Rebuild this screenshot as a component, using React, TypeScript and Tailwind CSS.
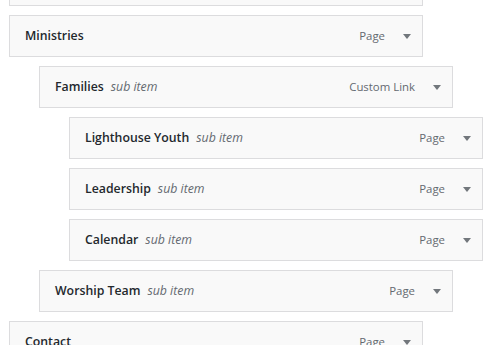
const items = [
  { title: "Home", sub: false, type: "Page", depth: 0 },
  { title: "Ministries", sub: false, type: "Page", depth: 0 },
  { title: "Families", sub: true, type: "Custom Link", depth: 1 },
  { title: "Lighthouse Youth", sub: true, type: "Page", depth: 2 },
  { title: "Leadership", sub: true, type: "Page", depth: 2 },
  { title: "Calendar", sub: true, type: "Page", depth: 2 },
  { title: "Worship Team", sub: true, type: "Page", depth: 1 },
  { title: "Contact", sub: false, type: "Page", depth: 0 },
];

const indent = ["ml-[9px]", "ml-[39px]", "ml-[69px]"];

const MenuItem = ({ title, sub, type, depth }: (typeof items)[number]) => (
  <div
    className={`${indent[depth]} w-[414px] h-[42px] shrink-0 flex items-center justify-between border border-[#dcdcde] bg-[#f9f9f9] pl-[15px] pr-[11px]`}
  >
    <div className="flex items-baseline text-[12.3px] leading-5">
      <span className="font-semibold text-[#23282d]">{title}</span>
      {sub && <span className="ml-[7px] italic text-[#646970]">sub item</span>}
    </div>
    <div className="flex items-center gap-[18px]">
      <span className="text-[11.4px] leading-5 text-[#646970]">{type}</span>
      <svg width="8" height="5" viewBox="0 0 8 5" className="mt-[1px]">
        <polygon points="0,0 8,0 4,5" fill="#72777c" />
      </svg>
    </div>
  </div>
);

export default function App() {
  return (
    <div
      className="w-[504px] h-[345px] overflow-hidden bg-white"
      style={{ fontFamily: '"Open Sans", "Liberation Sans", sans-serif' }}
    >
      <div className="flex flex-col gap-[9px] mt-[-36px]">
        {items.map((it) => (
          <MenuItem key={it.title} {...it} />
        ))}
      </div>
    </div>
  );
}
